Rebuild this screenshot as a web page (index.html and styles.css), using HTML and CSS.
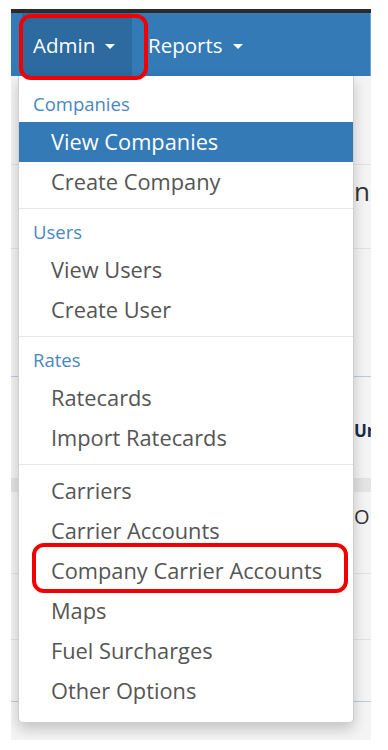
FILE: index.html
```html
<!DOCTYPE html>
<html lang="en">
<head>
    <meta charset="UTF-8">
    <meta name="viewport" content="width=device-width, initial-scale=1.0">
    <title>Admin Menu</title>
    <link rel="stylesheet" href="styles.css">
</head>
<body>
    <div class="shot">
        <div class="topbar"></div>
        <nav class="navbar">
            <div class="nav-item active">Admin <span class="caret"></span></div>
            <div class="nav-item">Reports <span class="caret"></span></div>
        </nav>

        <!-- page behind the open menu -->
        <div class="content">
            <div class="row row-1"></div>
            <div class="row row-2"><span class="page-title">ns</span></div>
            <div class="row row-3 blue-line"></div>
            <div class="row row-4"><span class="bold-cell">Ur</span></div>
            <div class="band"></div>
            <div class="row row-5"><span class="cell">OI</span></div>
            <div class="row row-6"></div>
            <div class="row row-7 blue-line"></div>
            <div class="row row-8"></div>
        </div>

        <!-- open dropdown -->
        <ul class="dropdown">
            <li class="dropdown-header">Companies</li>
            <li class="item selected">View Companies</li>
            <li class="item">Create Company</li>
            <li class="divider"></li>
            <li class="dropdown-header">Users</li>
            <li class="item">View Users</li>
            <li class="item">Create User</li>
            <li class="divider"></li>
            <li class="dropdown-header">Rates</li>
            <li class="item">Ratecards</li>
            <li class="item">Import Ratecards</li>
            <li class="divider"></li>
            <li class="item">Carriers</li>
            <li class="item">Carrier Accounts</li>
            <li class="item">Company Carrier Accounts</li>
            <li class="item">Maps</li>
            <li class="item">Fuel Surcharges</li>
            <li class="item">Other Options</li>
        </ul>

        <!-- red annotation boxes -->
        <div class="mark mark-admin"></div>
        <div class="mark mark-carrier"></div>
    </div>
</body>
</html>
```

FILE: styles.css
```css
body {
    margin: 0;
    background: #ffffff;
    font-family: "Open Sans", Arial, sans-serif;
}
.shot {
    position: relative;
    margin: 9px 0 0 11px;
    width: 360px;
    height: 731px;
    overflow: hidden;
    background: #f4f4f4;
}
.topbar {
    height: 4px;
    background: #2b2b2b;
}
.navbar {
    display: flex;
    height: 63px;
    padding-left: 11px;
    background: #337ab7;
    border-right: 1px solid #6fa6d6;
}
.nav-item {
    display: flex;
    align-items: center;
    gap: 10px;
    padding: 0 11px 0 16px;
    color: #ffffff;
    font-size: 20.5px;
}
.nav-item.active {
    box-sizing: border-box;
    width: 110px;
    padding-left: 11px;
    background: #2c6aa0;
}
.caret {
    width: 0;
    height: 0;
    margin-top: 3px;
    border-top: 5px solid #ffffff;
    border-left: 5px solid transparent;
    border-right: 5px solid transparent;
}

/* background page */
.row {
    border-bottom: 1px solid #e2e2e2;
    white-space: nowrap;
    padding-left: 343px;
}
.blue-line {
    border-bottom-color: #b5cde3;
}
.row-1 { height: 88px; }
.row-2 { height: 83px; }
.row-3 { height: 127px; }
.row-4 { height: 101px; }
.row-5 { height: 81px; }
.row-6 { height: 65px; }
.row-7 { height: 61px; }
.row-8 { height: 40px; border-bottom: 0; }
.band {
    height: 13px;
    background: #e4e4e4;
}
.page-title {
    display: inline-block;
    margin-top: 8px;
    font-size: 26px;
    color: #333333;
}
.bold-cell {
    display: inline-block;
    margin-top: 42px;
    font-size: 17px;
    font-weight: bold;
    color: #1d2a44;
}
.cell {
    display: inline-block;
    margin-top: 11px;
    font-size: 20px;
    color: #333333;
}

/* dropdown menu */
.dropdown {
    position: absolute;
    top: 67px;
    left: 7px;
    width: 334px;
    margin: 0;
    padding: 11px 0 11px;
    list-style: none;
    background: #ffffff;
    border: 1px solid #cfcfcf;
    border-top: 0;
    border-radius: 0 0 5px 5px;
    box-shadow: 0 6px 14px rgba(0, 0, 0, 0.2);
}
.dropdown-header {
    height: 35px;
    padding: 5px 0 0 14px;
    box-sizing: border-box;
    line-height: 24px;
    font-size: 18.5px;
    color: #4787c2;
}
.item {
    height: 40px;
    padding-left: 32px;
    line-height: 40px;
    font-size: 21.8px;
    color: #555555;
    white-space: nowrap;
}
.item.selected {
    background: #337ab7;
    color: #ffffff;
}
.divider {
    height: 1px;
    margin: 6px 0;
    background: #e5e5e5;
}

/* annotations */
.mark {
    position: absolute;
    border: 4px solid #f20000;
    border-radius: 12px;
    box-sizing: border-box;
}
.mark-admin {
    top: 5px;
    left: 8px;
    width: 129px;
    height: 66px;
}
.mark-carrier {
    top: 534px;
    left: 21px;
    width: 316px;
    height: 50px;
}
```
